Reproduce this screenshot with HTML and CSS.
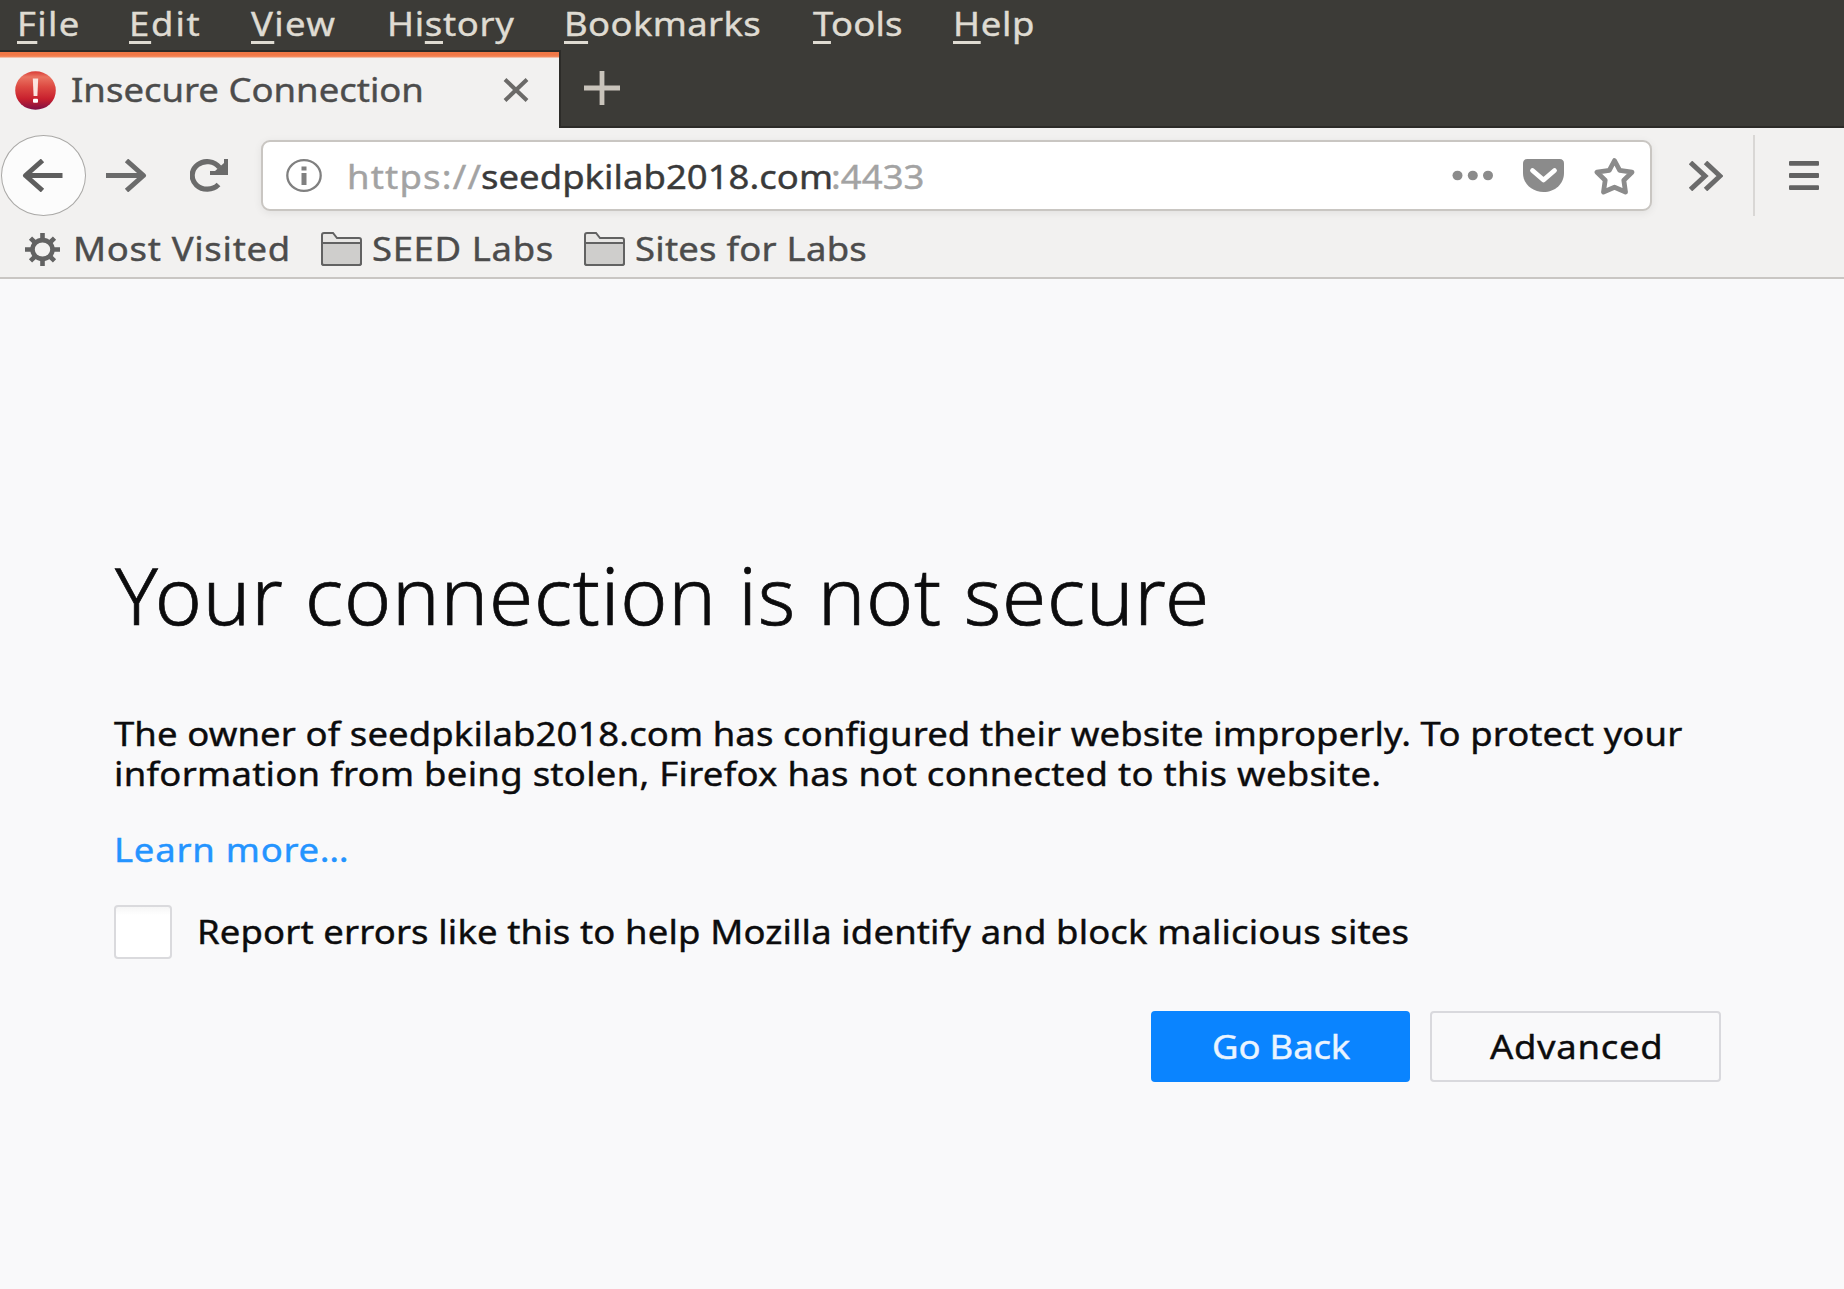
FILE: index.html
```
<!DOCTYPE html>
<html lang="en">
<head>
<meta charset="utf-8">
<title>Insecure Connection</title>
<link rel="stylesheet" href="styles.css">
</head>
<body>
<nav class="menubar">
  <span class="label menu-file"><u>F</u>ile</span>
  <span class="label menu-edit"><u>E</u>dit</span>
  <span class="label menu-view"><u>V</u>iew</span>
  <span class="label menu-history">Hi<u>s</u>tory</span>
  <span class="label menu-bookmarks"><u>B</u>ookmarks</span>
  <span class="label menu-tools"><u>T</u>ools</span>
  <span class="label menu-help"><u>H</u>elp</span>
</nav>
<div class="tabstrip">
  <div class="tab">
    <svg class="favicon" width="41" height="39" viewBox="0 0 41 39">
      <defs><linearGradient id="red" x1="0" y1="0" x2="0" y2="1"><stop offset="0" stop-color="#d93a35"/><stop offset=".15" stop-color="#ea7462"/><stop offset=".4" stop-color="#dd4a42"/><stop offset=".72" stop-color="#c8202e"/><stop offset="1" stop-color="#7d0f46"/></linearGradient></defs>
      <ellipse cx="20.5" cy="19.5" rx="20.3" ry="19.3" fill="url(#red)"/>
      <path d="M17.800 7.500h5.400l-.8 17.500h-3.800z" fill="#fbe4de"/><rect x="18" y="27.800" width="5" height="4" rx="1" fill="#fff"/>
    </svg>
    <span class="label tab-title">Insecure Connection</span>
    <svg class="tab-close" width="26" height="24" viewBox="0 0 26 24" fill="none" stroke="#6b6a68" stroke-width="4"><path d="M2 1.5 24 22.5M24 1.5 2 22.5"/></svg>
  </div>
  <div class="strip-rest">
    <svg width="36" height="34" viewBox="0 0 36 34" fill="none" stroke="#c9c4bb" stroke-width="4.800"><path d="M0 17H36"/><path d="M18 0V34"/></svg>
  </div>
</div>
<div class="navbar">
  <div class="back">
    <svg width="41" height="33" viewBox="0 0 41 33" fill="none" stroke="#5e5e5e" stroke-width="5" stroke-linejoin="round"><path d="M40.5 16.5H4M20.5 1.5 3.5 16.5l17 15"/></svg>
  </div>
  <svg class="forward" width="41" height="33" viewBox="0 0 41 33" fill="none" stroke="#6b6b6b" stroke-width="5" stroke-linejoin="round"><path d="M0 16.5H37M20.5 1.5l17 15-17 15"/></svg>
  <svg class="reload" width="38" height="33" viewBox="0 0 38 33"><path d="M29.5 8.500A15 13.800 0 1 0 28.500 25.500" fill="none" stroke="#6b6b6b" stroke-width="5.200"/><path d="M34 0h4v16H20v-4h5l9-8z" fill="#6b6b6b"/></svg>
  <div class="urlbar">
    <svg class="info" width="36" height="33" viewBox="0 0 36 33"><ellipse cx="18" cy="16.500" rx="16.700" ry="15.300" fill="none" stroke="#808080" stroke-width="2.300"/><path d="M15.500 7.500h5v4h-5zM15.500 14h5v12h-5z" fill="#808080"/></svg>
    <span class="label url-scheme">https://</span>
    <span class="label url-host">seedpkilab2018.com</span>
    <span class="label url-port">:4433</span>
    <svg class="dots" width="42" height="11" viewBox="0 0 42 11" fill="#8b8b8b"><ellipse cx="5.500" cy="5.500" rx="5" ry="4.800"/><ellipse cx="20.800" cy="5.500" rx="5" ry="4.800"/><ellipse cx="36" cy="5.500" rx="5" ry="4.800"/></svg>
    <svg class="pocket" width="41" height="33" viewBox="0 0 41 33"><path d="M4.500 0h32Q41 0 41 4.500V14C41 25 32 33 20.500 33S0 25 0 14V4.500Q0 0 4.500 0z" fill="#8b8b8b"/><path d="M9.500 11.500l11 9.500 11-9.500" fill="none" stroke="#fff" stroke-width="4.800" stroke-linecap="round" stroke-linejoin="round"/></svg>
    <svg class="star" width="41" height="38" viewBox="0 0 41 38" fill="none" stroke="#8b8b8b" stroke-width="4.800" stroke-linejoin="round"><path d="M20.500 3.500 25.700 13.300 38 15.200 29.800 23.200 31.500 35 20.500 30.200 9.500 35 11.200 23.200 3 15.200 15.300 13.300z"/></svg>
  </div>
  <svg class="overflow" width="34" height="30" viewBox="0 0 34 30" fill="none" stroke="#6b6b6b" stroke-width="5"><path d="M1.500 1.500l14.500 13.500-14.500 13.500M16.500 1.500l14.500 13.500-14.500 13.500"/></svg>
  <div class="separator"></div>
  <svg width="30" height="29" viewBox="0 0 30 29" fill="#626262"><rect width="30" height="4.800" rx="1"/><rect y="12.100" width="30" height="4.800" rx="1"/><rect y="24.200" width="30" height="4.800" rx="1"/></svg>
</div>
<div class="bookmarks">
  <svg class="gear" width="35" height="33" viewBox="0 0 35 33" fill="none" stroke="#626262"><ellipse cx="17.500" cy="16.500" rx="10" ry="9.400" stroke-width="4.600"/><path d="M17.500 0v6M17.500 27v6M0 16.500h6M29 16.500h6M5.500 5.200l4.500 4.300M25 23.500l4.500 4.300M29.500 5.200 25 9.500M10 23.500l-4.500 4.300" stroke-width="4.600"/></svg>
  <span class="label bm-visited">Most Visited</span>
  <svg class="folder" width="41" height="34" viewBox="0 0 41 34" stroke="#626262" stroke-width="2"><path d="M1 31V3q0-2 2-2h9l4 5h22q2 0 2 2v23q0 2-2 2H3q-2 0-2-2z" fill="#e7e6e4"/><path d="M1 11h39v20q0 2-2 2H3q-2 0-2-2z" fill="#cfcecc"/></svg>
  <span class="label bm-seed">SEED Labs</span>
  <svg class="folder" width="41" height="34" viewBox="0 0 41 34" stroke="#626262" stroke-width="2"><path d="M1 31V3q0-2 2-2h9l4 5h22q2 0 2 2v23q0 2-2 2H3q-2 0-2-2z" fill="#e7e6e4"/><path d="M1 11h39v20q0 2-2 2H3q-2 0-2-2z" fill="#cfcecc"/></svg>
  <span class="label bm-sites">Sites for Labs</span>
</div>
<main class="page">
  <h1>Your connection is not secure</h1>
  <p class="message"><span class="label line-one">The owner of seedpkilab2018.com has configured their website improperly. To protect your</span> <span class="label line-two">information from being stolen, Firefox has not connected to this website.</span></p>
  <a class="label learn">Learn more…</a>
  <div class="report"><span class="checkbox"></span><span class="label report-text">Report errors like this to help Mozilla identify and block malicious sites</span></div>
  <div class="buttons">
    <div class="button primary"><span class="label go-back">Go Back</span></div>
    <div class="button"><span class="label advanced">Advanced</span></div>
  </div>
</main>
</body>
</html>
```
FILE: styles.css
```
* { box-sizing: border-box; }
body {
  margin: 0;
  height: 1289px;
  overflow: hidden;
  background: #f9f9fa;
  color: #0c0c0d;
  font: 32px/40px "Noto Sans", "Open Sans", sans-serif;
}
svg { display: block; flex: none; }

/* interface text is set slightly wide */
.label {
  display: block;
  flex: none;
  width: fit-content;
  white-space: nowrap;
  transform: scaleX(1.14);
  transform-origin: left;
  -webkit-text-stroke: .4px currentColor;
}

.menubar {
  display: grid;
  grid-template-columns: 112px 122px 136px 177px 249px 140px 120px;
  height: 50px;
  padding-left: 17px;
  background: #3c3b37;
  color: #dfdbd2;
  line-height: 48px;
}
.menubar u {
  text-decoration-thickness: 2.5px;
  text-underline-offset: 5px;
  text-decoration-skip-ink: none;
}
.menu-file { letter-spacing: 1.2px; }
.menu-edit { letter-spacing: 1.6px; }
.menu-view { letter-spacing: 1.2px; }
.menu-history { letter-spacing: .6px; }
.menu-bookmarks { letter-spacing: .3px; }
.menu-tools { letter-spacing: .17px; }
.menu-help { letter-spacing: .6px; }

.tabstrip { display: flex; height: 78px; background: #3c3b37; }
.tab {
  display: flex;
  align-items: center;
  width: 559px;
  padding: 0 0 0 15px;
  border-top: 2px solid #2c2b28;
  background: linear-gradient(#f07746 0 3px, #f58d63 5px, #f2f1f0 6px);
}
.tab-title { width: 432px; margin-left: 15px; color: #4c4c4c; }
.strip-rest {
  flex: 1;
  display: flex;
  align-items: center;
  padding-left: 23px;
  border-left: 2px solid #2c2b28;
  border-bottom: 2px solid #2c2b28;
}

.navbar { display: flex; align-items: center; height: 95px; background: #f2f1f0; }
.back {
  display: flex;
  align-items: center;
  width: 85px;
  height: 81px;
  margin-left: 1px;
  padding-left: 20px;
  border: 1.5px solid #aaa9a7;
  border-radius: 50%;
  background: #fcfcfc;
}
.forward { margin-left: 20px; }
.reload { margin-left: 43px; }
.urlbar {
  display: flex;
  align-items: center;
  width: 1391px;
  height: 71px;
  margin-left: 33px;
  padding-left: 23px;
  border: 2px solid #c9c6c2;
  border-radius: 9px;
  background: #fff;
  box-shadow: 0 2px 8px rgba(0, 0, 0, .07);
}
.urlbar .label { padding-top: 3px; }
.url-scheme { width: 134px; margin-left: 25px; letter-spacing: 1.05px; color: #a3a3a3; }
.url-host { width: 350px; letter-spacing: .02px; color: #3a3a3a; }
.url-port { width: 91px; letter-spacing: .05px; color: #a3a3a3; }
.dots { margin-left: 530px; }
.pocket { margin-left: 29px; }
.star { margin-left: 30px; }
.overflow { margin-left: 37px; }
.separator { width: 2px; height: 81px; margin: 0 34px 0 30px; background: #d9d7d5; }

.bookmarks {
  display: flex;
  align-items: center;
  height: 56px;
  padding: 0 0 2px 25px;
  border-bottom: 2px solid #c9c6c3;
  background: #f2f1f0;
  color: #4c4c4c;
}
.bm-visited { width: 248px; margin-left: 13px; letter-spacing: .6px; }
.bm-seed { width: 212px; margin-left: 10px; letter-spacing: .55px; }
.bm-sites { margin-left: 10px; letter-spacing: .2px; }

.page { padding: 265px 123px 0 114px; }
h1 {
  margin: 0;
  padding-left: 1px;
  font-size: 80px;
  font-weight: 300;
  line-height: 100px;
  letter-spacing: .8px;
  -webkit-text-stroke: .7px currentColor;
}
.message { margin: 70px 0 0; line-height: 40px; }
.line-one { letter-spacing: .08px; }
.line-two { letter-spacing: .24px; }
.learn { margin-top: 36px; letter-spacing: .66px; color: #2494ff; }
.report { display: flex; align-items: center; margin-top: 35px; }
.checkbox {
  width: 58px;
  height: 54px;
  border: 2px solid #dadadd;
  border-radius: 4px;
  background: linear-gradient(#f6f6f6, #fff 8px);
}
.report-text { margin-left: 25px; letter-spacing: .11px; }
.buttons { display: flex; justify-content: flex-end; gap: 20px; margin-top: 52px; }
.button {
  display: flex;
  align-items: center;
  width: 291px;
  height: 71px;
  padding-left: 58px;
  border: 2px solid #d9d9dd;
  border-radius: 4px;
}
.primary { width: 259px; padding-left: 59px; border-color: #0a84ff; background: #0a84ff; color: #eaf4ff; }
.go-back { letter-spacing: -.15px; }
.advanced { letter-spacing: .6px; }
```
